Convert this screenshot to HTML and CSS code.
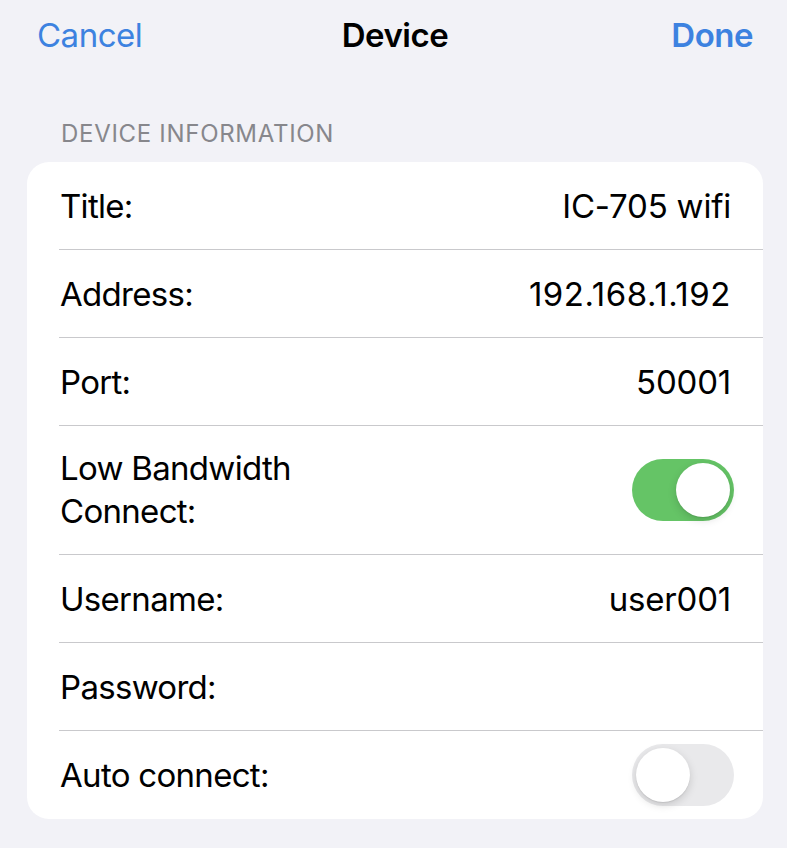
FILE: index.html
```html
<!DOCTYPE html>
<html>
<head>
<meta charset="utf-8">
<link rel="stylesheet" href="styles.css">
</head>
<body>
<div class="screen">
  <header class="nav">
    <span class="nav-btn cancel">Cancel</span>
    <span class="nav-title">Device</span>
    <span class="nav-btn done">Done</span>
  </header>
  <div class="section-title">DEVICE INFORMATION</div>
  <div class="card">
    <div class="row"><span class="label">Title:</span><span class="value">IC-705 wifi</span></div>
    <div class="row"><span class="label">Address:</span><span class="value num">192.168.1.192</span></div>
    <div class="row"><span class="label">Port:</span><span class="value">50001</span></div>
    <div class="row tall"><span class="label">Low Bandwidth<br>Connect:</span><span class="toggle on"><span class="knob"></span></span></div>
    <div class="row"><span class="label">Username:</span><span class="value">user001</span></div>
    <div class="row"><span class="label">Password:</span><span class="value"></span></div>
    <div class="row last"><span class="label">Auto connect:</span><span class="toggle off"><span class="knob"></span></span></div>
  </div>
</div>
</body>
</html>
```

FILE: styles.css
```css
html, body {
  margin: 0;
  padding: 0;
  background: #f2f2f7;
}
body {
  font-family: Inter, "Noto Sans", sans-serif;
  color: #000;
  width: 787px;
  height: 848px;
  overflow: hidden;
}
.screen {
  padding: 0 24px 0 27px;
}
.nav {
  display: grid;
  grid-template-columns: 1fr auto 1fr;
  align-items: center;
  height: 70px;
  padding: 0 10px 0 10px;
  font-size: 33px;
  letter-spacing: -0.5px;
}
.nav-btn {
  color: #3d82e0;
}
.nav-btn.cancel {
  justify-self: start;
}
.nav-btn.done {
  justify-self: end;
  font-weight: 600;
}
.nav-title {
  font-weight: 600;
}
.section-title {
  margin-top: 49px;
  padding-left: 34px;
  font-size: 24px;
  color: #87878c;
  letter-spacing: 0.7px;
  height: 43px;
}
.card {
  background: #fff;
  border-radius: 22px;
  overflow: hidden;
}
.row {
  display: flex;
  justify-content: space-between;
  align-items: center;
  height: 87px;
  margin-left: 32px;
  padding-right: 32px;
  border-bottom: 1px solid #c9c9cc;
  font-size: 33px;
}
.row.tall {
  height: 128px;
  line-height: 43px;
}
.row.last {
  border-bottom: none;
  height: 88px;
}
.label {
  padding-left: 1px;
  letter-spacing: -0.7px;
}
.value {
  letter-spacing: -0.2px;
}
.value.num {
  letter-spacing: 0.55px;
}
.toggle {
  position: relative;
  width: 102px;
  height: 62px;
  border-radius: 31px;
  flex: none;
  margin-right: -3px;
}
.toggle.on {
  background: #65c466;
}
.toggle.off {
  background: #e9e9eb;
}
.knob {
  position: absolute;
  top: 4px;
  width: 54px;
  height: 54px;
  border-radius: 50%;
  background: #fff;
  box-shadow: 0 3px 8px rgba(0,0,0,0.15), 0 1px 1px rgba(0,0,0,0.08);
}
.toggle.on .knob {
  right: 4px;
}
.toggle.off .knob {
  left: 4px;
}
```
